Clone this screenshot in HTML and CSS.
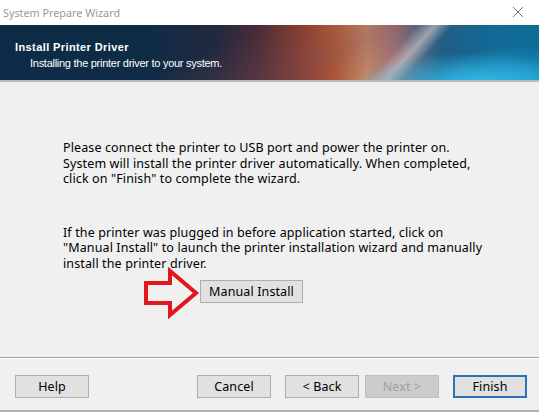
FILE: index.html
```html
<!DOCTYPE html>
<html lang="en">
<head>
<meta charset="utf-8">
<title>System Prepare Wizard</title>
<link rel="stylesheet" href="styles.css">
</head>
<body>
<div class="window">
  <div class="titlebar">
    <span class="title">System Prepare Wizard</span>
    <svg class="close" width="12" height="12" viewBox="0 0 12 12" aria-hidden="true">
      <path d="M1 1 L11 11 M11 1 L1 11" stroke="#7a7a7a" stroke-width="1" fill="none"/>
    </svg>
  </div>

  <div class="banner">
    <div class="banner-title">Install Printer Driver</div>
    <div class="banner-sub">Installing the printer driver to your system.</div>
  </div>

  <div class="content">
    <p class="para first">Please connect the printer to USB port and power the printer on.<br>System will install the printer driver automatically. When completed,<br>click on "Finish" to complete the wizard.</p>
    <p class="para second">If the printer was plugged in before application started, click on<br>"Manual Install" to launch the printer installation wizard and manually<br>install the printer driver.</p>
    <div class="manual-row">
      <button class="btn manual">Manual Install</button>
      <svg class="arrow" width="60" height="52" viewBox="0 0 60 52" aria-hidden="true">
        <path d="M5 16 L29 16 L29 4 L55 26 L29 48 L29 36 L5 36 Z" fill="none" stroke="#e3151d" stroke-width="4" stroke-linejoin="miter"/>
      </svg>
    </div>
  </div>

  <div class="footer">
    <button class="btn">Help</button>
    <div class="spacer"></div>
    <button class="btn">Cancel</button>
    <button class="btn gap-l">&lt; Back</button>
    <button class="btn gap-s" disabled>Next &gt;</button>
    <button class="btn gap-l primary">Finish</button>
  </div>
</div>
</body>
</html>
```

FILE: styles.css
```css
* { box-sizing: border-box; }

html, body {
  margin: 0;
  padding: 0;
  background: #f0f0f0;
}

.window {
  width: 539px;
  height: 412px;
  display: flex;
  flex-direction: column;
  background: #f0f0f0;
  font-family: "Noto Sans", "Open Sans", sans-serif;
  font-size: 12.5px;
  letter-spacing: 0.12px;
  color: #000;
  overflow: hidden;
}

/* window caption */
.titlebar {
  height: 25px;
  flex: none;
  background: #fff;
  display: flex;
  align-items: center;
  padding-left: 3px;
  position: relative;
}
.title {
  color: #9a9a9a;
  font-size: 10.8px;
  letter-spacing: 0;
}
.close {
  position: absolute;
  right: 15px;
  top: 6px;
}

/* wizard header banner */
.banner {
  height: 57px;
  flex: none;
  border-bottom: 2px solid #b9b9b9;
  padding: 16px 0 0 15px;
  color: #fff;
  font-family: "Liberation Sans", Arial, sans-serif;
  letter-spacing: 0;
  background:
    radial-gradient(ellipse 120px 30px at 470px 58px, rgba(50, 190, 235, 0.95), rgba(50, 190, 235, 0) 100%),
    radial-gradient(ellipse 90px 40px at 520px 60px, rgba(40, 170, 220, 0.8), rgba(40, 170, 220, 0) 100%),
    linear-gradient(132deg, rgba(255,255,255,0) 71%, rgba(225, 215, 215, 0.55) 74%, rgba(255,255,255,0) 77%),
    linear-gradient(155deg, rgba(0,0,0,0) 40%, rgba(120, 80, 90, 0.35) 60%, rgba(0,0,0,0) 75%),
    linear-gradient(90deg,
      #0d2b47 0%,
      #0f2c46 28%,
      #23293f 40%,
      #4a2b36 48%,
      #8a3d2e 56%,
      #b5582f 62%,
      #c98a66 68%,
      #a27478 73%,
      #5a6a86 77%,
      #1d5e86 82%,
      #126b97 92%,
      #0f6a96 100%);
}
.banner-title {
  font-weight: bold;
  font-size: 11px;
  line-height: 13px;
  letter-spacing: 0.4px;
}
.banner-sub {
  font-size: 11px;
  line-height: 13px;
  letter-spacing: -0.27px;
  padding-left: 15px;
  margin-top: 3px;
}

/* page body */
.content {
  flex: 1;
  padding: 0 0 0 63px;
  border-bottom: 1px solid #a0a0a0;
  position: relative;
}
.para {
  margin: 0;
  line-height: 15.5px;
}
.para.first { margin-top: 58px; }
.para.second { margin-top: 38px; }

.manual-row {
  margin-top: 9px;
  padding-left: 137px;
  position: relative;
}
.btn.manual { width: 103px; }
.arrow {
  position: absolute;
  left: 78px;
  top: -13px;
}

.btn {
  height: 23px;
  width: 74px;
  padding: 0;
  background: #e1e1e1;
  border: 1px solid #adadad;
  border-radius: 0;
  font-family: "Noto Sans", "Open Sans", sans-serif;
  font-size: 12.5px;
  letter-spacing: 0.12px;
  color: #000;
}
.btn:disabled {
  background: #cccccc;
  border-color: #bfbfbf;
  color: #a0a0a0;
}
.btn.primary {
  border: 2px solid #2a72b5;
}

/* bottom button strip */
.footer {
  height: 54px;
  flex: none;
  border-top: 1px solid #fff;
  border-bottom: 2px solid #b0b0b0;
  display: flex;
  align-items: flex-start;
  padding: 16px 12px 0 15px;
}
.spacer { flex: 1; }
.gap-l { margin-left: 14px; }
.gap-s { margin-left: 6px; }
```
